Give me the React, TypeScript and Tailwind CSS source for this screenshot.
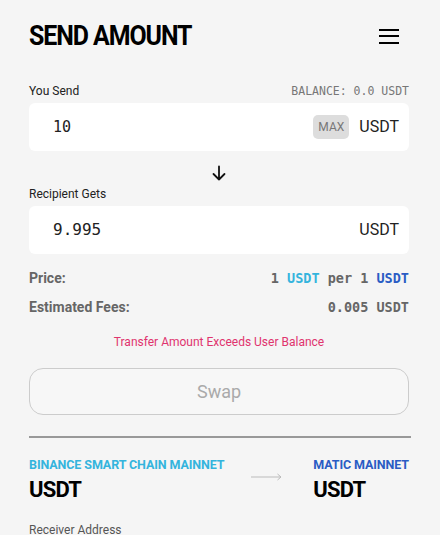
import React from 'react';

const mono = "font-['DejaVu_Sans_Mono','Liberation_Mono',monospace]";

const App: React.FC = () => {
  return (
    <div className="min-h-[535px] bg-[#f5f5f5] font-['Roboto',sans-serif] text-[#111]">
      <div className="pl-[29px] pr-[31px] pt-[20px]">
        <div className="flex items-center justify-between h-[32px]">
          <h1 className="text-[28px] font-bold tracking-[-1.2px] leading-none text-black scale-x-[0.89] origin-left">SEND AMOUNT</h1>
          <div className="flex flex-col gap-[4.5px] mr-[10px]">
            <span className="block w-[20px] h-[2px] bg-black" />
            <span className="block w-[20px] h-[2px] bg-black" />
            <span className="block w-[20px] h-[2px] bg-black" />
          </div>
        </div>

        <div className="flex items-end justify-between mt-[30px]">
          <span className="text-[12px] text-[#222]">You Send</span>
          <span className={`${mono} text-[11.5px] text-[#777]`}>BALANCE: 0.0 USDT</span>
        </div>
        <div className="mt-[3px] h-[48px] bg-white rounded-[6px] flex items-center pl-[24px] pr-[10px]">
          <span className={`${mono} text-[15px] text-[#222] flex-1`}>10</span>
          <span className="bg-[#dddddd] text-[#777] text-[12px] rounded-[5px] px-[5px] h-[24px] flex items-center">MAX</span>
          <span className="text-[16px] text-[#222] ml-[10px]">USDT</span>
        </div>

        <div className="flex justify-center mt-[14px] h-[16px]">
          <svg width="16" height="16" viewBox="0 0 16 16" fill="none" stroke="#111" strokeWidth="1.8" strokeLinecap="round" strokeLinejoin="round">
            <path d="M8 1.5v13M2.5 9l5.5 5.5L13.5 9" />
          </svg>
        </div>

        <div className="mt-[4px] text-[12px] text-[#222]">Recipient Gets</div>
        <div className="mt-[3px] h-[48px] bg-white rounded-[6px] flex items-center pl-[24px] pr-[10px]">
          <span className={`${mono} text-[16px] text-[#222] flex-1`}>9.995</span>
          <span className="text-[16px] text-[#222]">USDT</span>
        </div>

        <div className="flex items-center justify-between mt-[14px] h-[20px]">
          <span className="text-[14px] font-bold text-[#666]">Price:</span>
          <span className={`${mono} text-[13.5px] font-bold text-[#666]`}>
            1 <span className="text-[#34b4dd]">USDT</span> per 1 <span className="text-[#2a5cc4]">USDT</span>
          </span>
        </div>
        <div className="flex items-center justify-between mt-[9px] h-[20px]">
          <span className="text-[14px] font-bold text-[#666]">Estimated Fees:</span>
          <span className={`${mono} text-[13.5px] font-bold text-[#666]`}>0.005 USDT</span>
        </div>

        <div className="mt-[16px] text-center text-[12px] text-[#e0336e]">Transfer Amount Exceeds User Balance</div>

        <button className="mt-[17px] w-full h-[47px] rounded-[14px] border border-[#cccccc] bg-[#f7f7f7] text-[18px] text-[#aaaaaa]">
          Swap
        </button>

        <div className="mt-[21px] h-[2px] bg-[#999999] mr-[-2px]" />

        <div className="flex items-start mt-[21px]">
          <div className="flex-1">
            <div className="text-[12.5px] font-bold text-[#34b4dd] tracking-[-0.1px] leading-none">BINANCE SMART CHAIN MAINNET</div>
            <div className="text-[22px] font-bold text-black tracking-[-0.8px] leading-none mt-[7px]">USDT</div>
          </div>
          <div className="mr-[30px] pt-[14px]">
            <svg width="32" height="8" viewBox="0 0 32 8" fill="none" stroke="#bbbbbb" strokeWidth="1">
              <path d="M0 4h30M26.5 1l3.5 3-3.5 3" />
            </svg>
          </div>
          <div>
            <div className="text-[12.5px] font-bold text-[#2a5cc4] tracking-[-0.1px] leading-none">MATIC MAINNET</div>
            <div className="text-[22px] font-bold text-black tracking-[-0.8px] leading-none mt-[7px]">USDT</div>
          </div>
        </div>

        <div className="mt-[20px] text-[12px] text-[#555]">Receiver Address</div>
      </div>
    </div>
  );
};

export default App;
